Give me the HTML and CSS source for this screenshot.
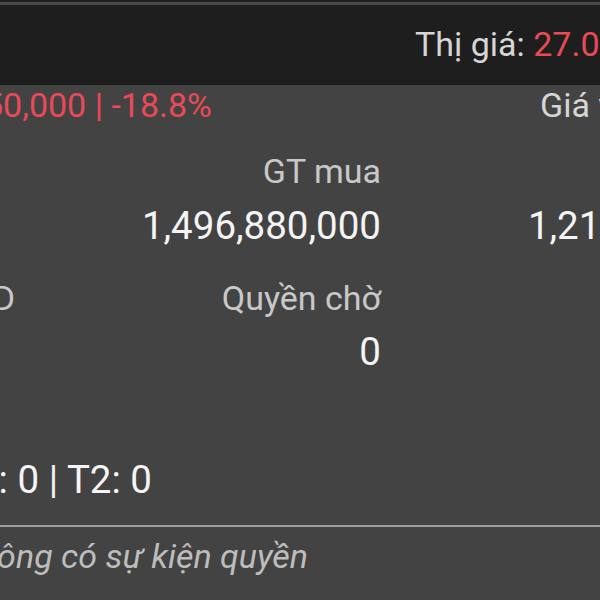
FILE: index.html
```html
<!DOCTYPE html>
<html lang="vi">
<head>
<meta charset="utf-8">
<title>Chi tiết mã</title>
<link rel="stylesheet" href="styles.css">
</head>
<body>
<div class="app">
  <header class="topbar">
    <div class="topline"></div>
    <div class="bar-row">
      <span class="muted">Thị giá: </span><span class="red">27.000</span>
    </div>
  </header>
  <main class="panel">
    <div class="row row-change">
      <div class="endbox end-change"><span class="red">Lãi/lỗ: -6,250,000 | -18.8%</span></div>
      <div class="cost">Giá vốn: 33,250</div>
    </div>

    <div class="grid labels first-labels">
      <div class="c1"></div>
      <div class="c2">GT mua</div>
      <div class="c3">GT TT</div>
    </div>
    <div class="grid values first-values">
      <div class="c1"></div>
      <div class="c2">1,496,880,000</div>
      <div class="c3">1,215,000,000</div>
    </div>

    <div class="grid labels second-labels">
      <div class="c1"><div class="endbox end-d">KL chờ GD</div></div>
      <div class="c2">Quyền chờ</div>
      <div class="c3"></div>
    </div>
    <div class="grid values second-values">
      <div class="c1"></div>
      <div class="c2">0</div>
      <div class="c3"></div>
    </div>

    <div class="row row-pending">
      <div class="endbox end-pending">T0: 0 | T1: 0 | T2: 0</div>
    </div>

    <div class="divider"></div>

    <p class="empty"><span>Không có sự kiện quyền</span></p>
  </main>
</div>
</body>
</html>
```

FILE: styles.css
```css
html, body {
  margin: 0;
  padding: 0;
}
body {
  width: 600px;
  height: 600px;
  overflow: hidden;
  background: #434343;
  font-family: Roboto, "Noto Sans", "Liberation Sans", sans-serif;
  color: #f2f2f2;
}
.app {
  width: 600px;
  height: 600px;
  overflow: hidden;
}
.topbar {
  background: #1e1e1e;
  height: 85px;
  padding-top: 2px;
  box-sizing: border-box;
}
.topline {
  height: 3px;
  background: #4a4a4a;
}
.bar-row {
  padding-top: 19px;
  padding-left: 415px;
  font-size: 34px;
  line-height: 40px;
  white-space: nowrap;
}
.muted {
  color: #d6d6d6;
}
.red {
  color: #e84a57;
}
.panel {
  display: flex;
  flex-direction: column;
}
.row {
  display: flex;
  white-space: nowrap;
}
.endbox {
  display: flex;
  justify-content: flex-end;
  white-space: nowrap;
  flex: none;
}
.row-change {
  font-size: 34px;
  line-height: 40px;
}
.end-change {
  width: 212px;
}
.cost {
  margin-left: 328px;
  color: #d6d6d6;
}
.grid {
  display: flex;
  white-space: nowrap;
}
.grid > div {
  flex: none;
}
.c1 {
  width: 15px;
}
.c2 {
  width: 366px;
  text-align: right;
}
.c3 {
  width: 386px;
  text-align: right;
}
.labels {
  font-size: 34px;
  line-height: 40px;
  color: #c8c8c8;
}
.values {
  font-size: 38.5px;
  line-height: 44px;
  color: #f4f4f4;
}
.first-labels {
  margin-top: 26px;
}
.first-values {
  margin-top: 13px;
}
.second-labels {
  margin-top: 30px;
}
.end-d {
  width: 15px;
}
.second-values {
  margin-top: 12px;
}
.row-pending {
  margin-top: 84px;
  font-size: 38.5px;
  line-height: 44px;
  color: #f4f4f4;
}
.end-pending {
  width: 152px;
}
.divider {
  margin-top: 23px;
  height: 2px;
  background: #9c9c9c;
}
.empty {
  margin: 9px 0 0 0;
  display: flex;
  justify-content: flex-end;
  width: 308px;
  font-size: 34px;
  line-height: 40px;
  font-style: italic;
  color: #bdbdbd;
  white-space: nowrap;
}
```
